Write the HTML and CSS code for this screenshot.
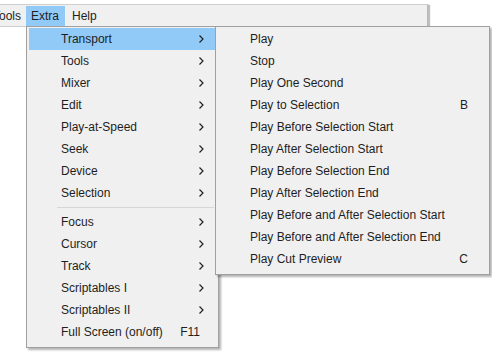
FILE: index.html
```html
<!DOCTYPE html>
<html lang="en">
<head>
    <meta charset="UTF-8">
    <meta name="viewport" content="width=device-width, initial-scale=1.0">
    <title>Extra menu</title>
    <link rel="stylesheet" href="styles.css">
</head>
<body>
    <div class="menubar">
        <div class="bar-item first">Tools</div>
        <div class="bar-item open">Extra</div>
        <div class="bar-item help">Help</div>
    </div>

    <!-- Extra dropdown -->
    <div class="menu main-menu">
        <div class="item active"><span>Transport</span><svg class="arrow" width="5" height="8" viewBox="0 0 5 8"><polyline points="0.5,0.5 4,4 0.5,7.5" fill="none" stroke="#222" stroke-width="1.2"/></svg></div>
        <div class="item"><span>Tools</span><svg class="arrow" width="5" height="8" viewBox="0 0 5 8"><polyline points="0.5,0.5 4,4 0.5,7.5" fill="none" stroke="#222" stroke-width="1.2"/></svg></div>
        <div class="item"><span>Mixer</span><svg class="arrow" width="5" height="8" viewBox="0 0 5 8"><polyline points="0.5,0.5 4,4 0.5,7.5" fill="none" stroke="#222" stroke-width="1.2"/></svg></div>
        <div class="item"><span>Edit</span><svg class="arrow" width="5" height="8" viewBox="0 0 5 8"><polyline points="0.5,0.5 4,4 0.5,7.5" fill="none" stroke="#222" stroke-width="1.2"/></svg></div>
        <div class="item"><span>Play-at-Speed</span><svg class="arrow" width="5" height="8" viewBox="0 0 5 8"><polyline points="0.5,0.5 4,4 0.5,7.5" fill="none" stroke="#222" stroke-width="1.2"/></svg></div>
        <div class="item"><span>Seek</span><svg class="arrow" width="5" height="8" viewBox="0 0 5 8"><polyline points="0.5,0.5 4,4 0.5,7.5" fill="none" stroke="#222" stroke-width="1.2"/></svg></div>
        <div class="item"><span>Device</span><svg class="arrow" width="5" height="8" viewBox="0 0 5 8"><polyline points="0.5,0.5 4,4 0.5,7.5" fill="none" stroke="#222" stroke-width="1.2"/></svg></div>
        <div class="item"><span>Selection</span><svg class="arrow" width="5" height="8" viewBox="0 0 5 8"><polyline points="0.5,0.5 4,4 0.5,7.5" fill="none" stroke="#222" stroke-width="1.2"/></svg></div>
        <div class="separator"></div>
        <div class="item"><span>Focus</span><svg class="arrow" width="5" height="8" viewBox="0 0 5 8"><polyline points="0.5,0.5 4,4 0.5,7.5" fill="none" stroke="#222" stroke-width="1.2"/></svg></div>
        <div class="item"><span>Cursor</span><svg class="arrow" width="5" height="8" viewBox="0 0 5 8"><polyline points="0.5,0.5 4,4 0.5,7.5" fill="none" stroke="#222" stroke-width="1.2"/></svg></div>
        <div class="item"><span>Track</span><svg class="arrow" width="5" height="8" viewBox="0 0 5 8"><polyline points="0.5,0.5 4,4 0.5,7.5" fill="none" stroke="#222" stroke-width="1.2"/></svg></div>
        <div class="item"><span>Scriptables I</span><svg class="arrow" width="5" height="8" viewBox="0 0 5 8"><polyline points="0.5,0.5 4,4 0.5,7.5" fill="none" stroke="#222" stroke-width="1.2"/></svg></div>
        <div class="item"><span>Scriptables II</span><svg class="arrow" width="5" height="8" viewBox="0 0 5 8"><polyline points="0.5,0.5 4,4 0.5,7.5" fill="none" stroke="#222" stroke-width="1.2"/></svg></div>
        <div class="item"><span>Full Screen (on/off)</span><span class="shortcut">F11</span></div>
    </div>

    <!-- Transport submenu -->
    <div class="menu sub-menu">
        <div class="item"><span>Play</span></div>
        <div class="item"><span>Stop</span></div>
        <div class="item"><span>Play One Second</span></div>
        <div class="item"><span>Play to Selection</span><span class="shortcut">B</span></div>
        <div class="item"><span>Play Before Selection Start</span></div>
        <div class="item"><span>Play After Selection Start</span></div>
        <div class="item"><span>Play Before Selection End</span></div>
        <div class="item"><span>Play After Selection End</span></div>
        <div class="item"><span>Play Before and After Selection Start</span></div>
        <div class="item"><span>Play Before and After Selection End</span></div>
        <div class="item"><span>Play Cut Preview</span><span class="shortcut">C</span></div>
    </div>
</body>
</html>
```

FILE: styles.css
```css
body {
    font-family: "Liberation Sans", Arial, sans-serif;
    font-size: 12px;
    color: #1e1e1e;
    margin: 0;
    padding: 4px 0 0 0;
    background-color: #ffffff;
    overflow: hidden;
}

/* Menu bar */
.menubar {
    display: flex;
    width: 427px;
    padding-top: 1px;
    background-color: #f0f0f0;
    border-top: 1px solid #cfcfcf;
    border-right: 1px solid #b8b8b8;
    border-bottom: 1px solid #cfcfcf;
    box-shadow: 2px 1px 1px rgba(0, 0, 0, 0.25);
}

.bar-item {
    height: 20px;
    line-height: 20px;
    padding: 0 5px;
}

.bar-item.first {
    margin-left: -12px;
}

.bar-item.open {
    padding: 0 6px 0 5px;
    background-color: #91c9f7;
}

.bar-item.help {
    margin-left: 2px;
}

/* Dropdowns */
.menu {
    position: absolute;
    top: 26px;
    box-sizing: border-box;
    padding: 1px 2px 4px 2px;
    background-color: #f0f0f0;
    border: 1px solid #a0a0a0;
    box-shadow: 2px 2px 2px rgba(0, 0, 0, 0.3);
}

.main-menu {
    left: 26px;
    width: 193px;
}

.sub-menu {
    left: 215px;
    width: 275px;
}

.item {
    display: flex;
    align-items: center;
    justify-content: space-between;
    height: 22px;
    padding: 0 12px 0 32px;
}

.item.active {
    background-color: #91c9f7;
}

.main-menu .shortcut {
    margin-right: 4px;
}

.sub-menu .item {
    padding-right: 19px;
}

.separator {
    height: 1px;
    margin: 3px 2px 3px 28px;
    background-color: #d7d7d7;
}
```
